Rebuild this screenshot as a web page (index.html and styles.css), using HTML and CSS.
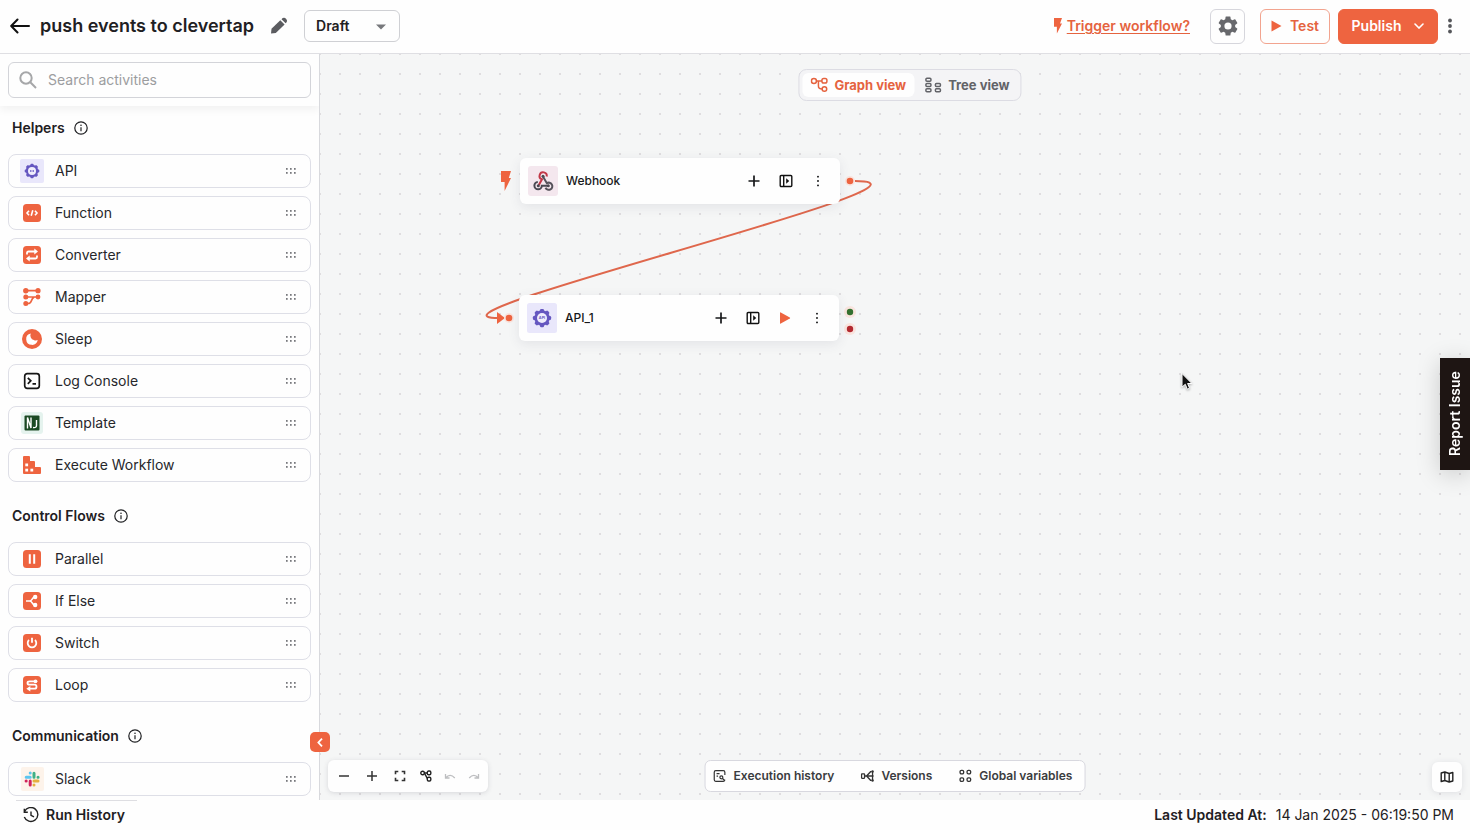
FILE: index.html
```html
<!DOCTYPE html>
<html lang="en">
<head>
<meta charset="utf-8">
<meta name="viewport" content="width=device-width, initial-scale=1">
<title>push events to clevertap</title>
<link rel="stylesheet" href="styles.css">
</head>
<body>
<svg class="sprite" aria-hidden="true">
  <symbol id="grip" viewBox="0 0 12 8"><g fill="#6a6b70"><rect x="1" y="1" width="1.700" height="1.700" rx=".5"/><rect x="5" y="1" width="1.700" height="1.700" rx=".5"/><rect x="9" y="1" width="1.700" height="1.700" rx=".5"/><rect x="1" y="5" width="1.700" height="1.700" rx=".5"/><rect x="5" y="5" width="1.700" height="1.700" rx=".5"/><rect x="9" y="5" width="1.700" height="1.700" rx=".5"/></g></symbol>
  <symbol id="info" viewBox="0 0 14 14"><g fill="none" stroke="currentColor" stroke-width="1.2"><circle cx="7" cy="7" r="6.2"/><path d="M7 6.2v4"/></g><circle cx="7" cy="4.2" r=".8" fill="currentColor"/></symbol>
  <symbol id="gear" viewBox="0 0 24 24"><rect width="24" height="24" rx="2" fill="#e9e7fb"/><g fill="#6557c0"><circle cx="12" cy="12" r="6.200"/><rect x="10.400" y="4.700" width="3.200" height="14.600" rx="1"/><rect x="10.400" y="4.700" width="3.200" height="14.600" rx="1" transform="rotate(45 12 12)"/><rect x="10.400" y="4.700" width="3.200" height="14.600" rx="1" transform="rotate(90 12 12)"/><rect x="10.400" y="4.700" width="3.200" height="14.600" rx="1" transform="rotate(135 12 12)"/></g><circle cx="12" cy="12" r="4" fill="#efedfc"/></symbol>
  <symbol id="bolt" viewBox="0 0 10 20"><path d="M0 0h10L7.500 7H10L3.600 19.500V11H0z" fill="#ee6440"/></symbol>
  <symbol id="plus" viewBox="0 0 14 14"><path d="M7 1.500v11M1.500 7h11" stroke="currentColor" stroke-width="1.700"/></symbol>
  <symbol id="panel" viewBox="0 0 14 14"><g fill="none" stroke="#111" stroke-width="1.400"><rect x="1.200" y="1.500" width="11.600" height="11" rx="1"/><path d="M4.700 1.500v11"/></g><path d="M7.200 4.300 10.200 7 7.200 9.700z" fill="#111"/></symbol>
  <symbol id="dots" viewBox="0 0 4 16"><g fill="currentColor"><circle cx="2" cy="3" r="1.100"/><circle cx="2" cy="8" r="1.100"/><circle cx="2" cy="13" r="1.100"/></g></symbol>
  <symbol id="play" viewBox="0 0 12 12"><path d="M1 .8v10.400q0 .8.800.400l9-5q.800-.600 0-1.200l-9-5Q1 0 1 .8z" fill="#ee6440"/></symbol>
</svg>

<header class="topbar">
  <button class="plain" aria-label="Back"><svg width="20" height="16" viewBox="0 0 20 16" fill="none" stroke="#111" stroke-width="2" stroke-linecap="round" stroke-linejoin="round"><path d="M19 8H1.500M7.500 1.500 1.200 8l6.300 6.500"/></svg></button>
  <h1 class="title">push events to clevertap</h1>
  <button class="plain edit" aria-label="Rename"><svg width="18" height="18" viewBox="0 0 18 18" fill="#5b5c60"><path d="M1 16.500l.5-4.700 8.800-8.500 4.300 4.200-8.800 8.500z"/><path d="m11.500 2.200 1.200-1.200q2-.8 3.300.7 1.600 1.400.8 3.200l-1.200 1.400z"/></svg></button>
  <div class="status">
    <select class="status-select" aria-label="Workflow status"><option>Draft</option><option>Published</option></select>
    <svg class="status-caret" width="10" height="6" viewBox="0 0 10 6"><path d="M0 .5h10L5 5.500z" fill="#77787c"/></svg>
  </div>
  <div class="actions">
    <a class="trigger" href="#trigger"><svg width="8" height="16"><use href="#bolt"/></svg><span>Trigger workflow?</span></a>
    <button class="btn gear" aria-label="Settings"><svg width="24" height="24" viewBox="0 0 24 24" fill="#67686c"><path d="M19.140 12.940c.04-.3.060-.61.060-.94s-.02-.64-.07-.94l2.030-1.580a.49.490 0 0 0 .12-.61l-1.920-3.320a.49.490 0 0 0-.59-.22l-2.390.96a7 7 0 0 0-1.620-.94l-.36-2.540A.48.480 0 0 0 13.920 2.400h-3.840a.48.480 0 0 0-.47.410l-.36 2.540c-.59.240-1.130.57-1.620.94l-2.390-.96a.48.480 0 0 0-.59.220L2.740 8.870a.48.480 0 0 0 .12.610l2.030 1.580c-.05.3-.09.630-.09.940s.02.640.07.940l-2.030 1.580a.49.490 0 0 0-.12.610l1.920 3.320c.12.220.37.290.59.220l2.390-.96c.5.380 1.030.7 1.620.94l.36 2.540c.05.240.24.410.48.410h3.840c.24 0 .44-.17.470-.41l.36-2.540c.59-.24 1.130-.56 1.620-.94l2.390.96c.22.080.47 0 .59-.22l1.920-3.320a.48.480 0 0 0-.12-.61zM12 15.600A3.600 3.600 0 1 1 12 8.400a3.600 3.600 0 0 1 0 7.200z"/></svg></button>
    <button class="btn test"><svg width="11" height="12" viewBox="0 0 11 12"><path d="M.5.500v11L10.500 6z" fill="#ee6440"/></svg>Test</button>
    <button class="btn publish">Publish<svg width="10" height="6" viewBox="0 0 10 6" fill="none" stroke="#fff" stroke-width="1.600" stroke-linecap="round"><path d="m1 1 4 4 4-4"/></svg></button>
    <button class="plain more" aria-label="More"><svg width="6" height="18" viewBox="0 0 6 18" fill="#55565a"><circle cx="3" cy="3.500" r="1.900"/><circle cx="3" cy="9" r="1.900"/><circle cx="3" cy="14.500" r="1.900"/></svg></button>
  </div>
</header>

<div class="workspace">
  <aside class="sidebar">
    <div class="search-wrap">
      <label class="search">
        <svg width="18" height="18" viewBox="0 0 18 18" fill="none" stroke="#a6a7a9" stroke-width="2"><circle cx="7" cy="7" r="5.700"/><path d="m11.300 11.300 5.700 5.700"/></svg>
        <input type="search" placeholder="Search activities" aria-label="Search activities">
      </label>
    </div>
    <div class="catalog">
      <section class="group">
        <h2 class="group-title">Helpers <svg width="14" height="14"><use href="#info"/></svg></h2>
        <ul class="items">
          <li><button class="item"><svg width="24" height="24" viewBox="0 0 24 24"><use href="#gear"/><path d="M10 12h4" stroke="#6557c0" stroke-width="1.500" stroke-dasharray="1 .5"/></svg><span>API</span><svg width="12" height="8"><use href="#grip"/></svg></button></li>
          <li><button class="item"><svg width="24" height="24" viewBox="0 0 24 24"><rect x="3" y="3" width="18" height="18" rx="3.500" fill="#ee6440"/><path d="M9 9.700 7 12l2 2.300M15 9.700l2 2.300-2 2.300M12.800 9.300l-1.600 5.400" fill="none" stroke="#fff" stroke-width="1.600"/></svg><span>Function</span><svg width="12" height="8"><use href="#grip"/></svg></button></li>
          <li><button class="item"><svg width="24" height="24" viewBox="0 0 24 24"><rect x="3" y="3" width="18" height="18" rx="3.500" fill="#ee6440"/><path d="M7 11.500V10q0-1.500 1.500-1.500H15M17 12.500V14q0 1.500-1.500 1.500H9" fill="none" stroke="#fff" stroke-width="1.800"/><path d="M14.300 5.500v6l3.700-3zM9.700 12.500v6l-3.700-3z" fill="#fff"/></svg><span>Converter</span><svg width="12" height="8"><use href="#grip"/></svg></button></li>
          <li><button class="item"><svg width="24" height="24" viewBox="0 0 24 24"><path d="M6 5.700h12M6 12h12M6 18.500h2q2.500 0 3.300-2.500T14 12h4" fill="none" stroke="#ee6440" stroke-width="1.700"/><g fill="#ee6440"><circle cx="5.800" cy="5.700" r="2.700"/><circle cx="5.800" cy="12" r="2.500"/><circle cx="5.800" cy="18.500" r="2.500"/><circle cx="18" cy="5.700" r="2.600"/><circle cx="18" cy="12" r="2.400"/></g></svg><span>Mapper</span><svg width="12" height="8"><use href="#grip"/></svg></button></li>
          <li><button class="item"><svg width="24" height="24" viewBox="0 0 24 24"><circle cx="12" cy="12" r="10" fill="#ee6440"/><path d="M10.800 6.400a5.800 5.800 0 1 0 6.900 6.700 4.600 4.600 0 0 1-3.900-.1 4.800 4.800 0 0 1-3-6.600z" fill="#fff"/></svg><span>Sleep</span><svg width="12" height="8"><use href="#grip"/></svg></button></li>
          <li><button class="item"><svg width="24" height="24" viewBox="0 0 24 24" fill="none" stroke="#161616" stroke-width="1.700"><rect x="4.700" y="4.700" width="14.600" height="14.600" rx="2.500"/><path d="m7.800 8.800 3 3-3 3M12.500 14.800h3.500"/></svg><span>Log Console</span><svg width="12" height="8"><use href="#grip"/></svg></button></li>
          <li><button class="item"><svg width="24" height="24" viewBox="0 0 24 24"><rect x="1" y="1" width="22" height="22" rx="3" fill="#e5f3ee"/><rect x="4.500" y="4.500" width="15" height="15" rx="1" fill="#1c4a24"/><path d="M7.500 17.500v-11l3.500 10.500V6.500M16.500 9v5.500q0 2.500-3.500 2" fill="none" stroke="#fff" stroke-width="1.400"/></svg><span>Template</span><svg width="12" height="8"><use href="#grip"/></svg></button></li>
          <li><button class="item"><svg width="24" height="24" viewBox="0 0 24 24"><path d="M3 4q0-1 1-1h5q1 0 1 1v4h4q1 0 1 1v5h5q1 0 1 1v5q0 1-1 1H4q-1 0-1-1z" fill="#ee6440"/><g fill="#fff"><rect x="5.300" y="10.500" width="2.800" height="2.800"/><rect x="5.300" y="15.700" width="2.800" height="2.800"/><rect x="10.400" y="15.700" width="2.800" height="2.800"/></g></svg><span>Execute Workflow</span><svg width="12" height="8"><use href="#grip"/></svg></button></li>
        </ul>
      </section>
      <section class="group">
        <h2 class="group-title">Control Flows <svg width="14" height="14"><use href="#info"/></svg></h2>
        <ul class="items">
          <li><button class="item"><svg width="24" height="24" viewBox="0 0 24 24"><rect x="3" y="3" width="18" height="18" rx="3.500" fill="#ee6440"/><path d="M9.800 7.300v9.400M14.200 7.300v9.400" stroke="#fff" stroke-width="2"/></svg><span>Parallel</span><svg width="12" height="8"><use href="#grip"/></svg></button></li>
          <li><button class="item"><svg width="24" height="24" viewBox="0 0 24 24"><rect x="3" y="3" width="18" height="18" rx="3.500" fill="#ee6440"/><path d="M6 12h3.500q1.500 0 2.500-1.700T14.500 8M9.500 12q1.500 0 2.500 1.700t2.500 2.300" fill="none" stroke="#fff" stroke-width="1.600"/><circle cx="15.200" cy="8" r="2.200" fill="#fff"/><circle cx="15.200" cy="16" r="2.200" fill="#fff"/></svg><span>If Else</span><svg width="12" height="8"><use href="#grip"/></svg></button></li>
          <li><button class="item"><svg width="24" height="24" viewBox="0 0 24 24"><rect x="3" y="3" width="18" height="18" rx="3.500" fill="#ee6440"/><path d="M9 9a4.300 4.300 0 1 0 6 0M12 6.800v5" fill="none" stroke="#fff" stroke-width="1.800"/></svg><span>Switch</span><svg width="12" height="8"><use href="#grip"/></svg></button></li>
          <li><button class="item"><svg width="24" height="24" viewBox="0 0 24 24"><rect x="3" y="3" width="18" height="18" rx="3.500" fill="#ee6440"/><path d="M15.500 8.300H9.500Q7.500 8.300 7.500 10t2 1.700h5q2 0 2 2t-2 2H9" fill="none" stroke="#fff" stroke-width="1.800"/><circle cx="15.500" cy="8.300" r="1.900" fill="#fff"/><path d="M10.300 12.900v5.600l-4-2.800z" fill="#fff"/></svg><span>Loop</span><svg width="12" height="8"><use href="#grip"/></svg></button></li>
        </ul>
      </section>
      <section class="group">
        <h2 class="group-title">Communication <svg width="14" height="14"><use href="#info"/></svg></h2>
        <ul class="items">
          <li><button class="item"><svg width="24" height="24" viewBox="0 0 24 24"><rect x="1" y="0" width="23" height="24" rx="2" fill="#fdf3ea"/><g fill="none" stroke-width="3" stroke-linecap="round"><path d="M6.200 10.200h4M10.200 5.900v.1" stroke="#5cc5ef"/><path d="M14 6.200v4M18 10.200h.1" stroke="#3fb185"/><path d="M14 14h4M14 18v.1" stroke="#e6b03f"/><path d="M10.200 14v4M6.100 14h.1" stroke="#d0245c"/></g></svg><span>Slack</span><svg width="12" height="8"><use href="#grip"/></svg></button></li>
        </ul>
      </section>
    </div>
    <button class="collapse" aria-label="Collapse sidebar"><svg width="6" height="9" viewBox="0 0 6 9" fill="none" stroke="#fff" stroke-width="1.800"><path d="M5 .7 1.400 4.500 5 8.300"/></svg></button>
  </aside>

  <main class="canvas">
    <svg class="edges" aria-hidden="true">
      <path d="M535 127C652 127 76 264 179 264" fill="none" stroke="#df674c" stroke-width="2"/>
      <path d="M177 258v12l8-6z" fill="#ee6440"/>
      <g fill="#f9e4de"><circle cx="530" cy="127" r="5"/><circle cx="189" cy="264" r="5"/><circle cx="530" cy="258" r="6"/><circle cx="530" cy="275" r="6"/></g>
      <circle cx="530" cy="127" r="3.300" fill="#ee6440"/><circle cx="189" cy="264" r="3.300" fill="#ee6440"/>
      <circle cx="530" cy="258" r="3.200" fill="#34702f"/><circle cx="530" cy="275" r="3.200" fill="#b32a30"/>
    </svg>
    <svg class="node-bolt" width="12" height="20" viewBox="0 0 12 20"><path d="M1 0h10L8.800 7H11L4.600 20V11H1z" fill="#ee6440"/></svg>

    <article class="node node-webhook">
      <svg width="30" height="30" viewBox="0 0 30 30"><rect width="30" height="30" rx="3" fill="#f4e7ee"/><g fill="none" stroke-width="2"><path d="M10.800 19 14 13.300a3.600 3.600 0 1 1 4.700-2.800" stroke="#c23747"/><path d="m15 10.500 3.800 6.700a3.600 3.600 0 1 1-1.300 4.600" stroke="#55525a"/><path d="M20.500 19.700h-6.700a3.700 3.700 0 1 1-4-3.800" stroke="#494851"/></g><g fill="#4a4850"><circle cx="15" cy="10.300" r="1.500"/><circle cx="10.300" cy="19.700" r="1.500"/><circle cx="20.300" cy="19.700" r="1.500"/></g></svg>
      <h3 class="node-name">Webhook</h3>
      <button class="plain" aria-label="Add step"><svg width="14" height="14"><use href="#plus"/></svg></button>
      <button class="plain" aria-label="Open panel"><svg width="14" height="14"><use href="#panel"/></svg></button>
      <button class="plain" aria-label="More options"><svg width="14" height="14"><use href="#dots"/></svg></button>
    </article>
    <article class="node node-api">
      <svg width="30" height="30" viewBox="0 0 24 24"><use href="#gear"/><text x="12" y="13" font-size="3" font-weight="700" text-anchor="middle" fill="#6557c0">API</text></svg>
      <h3 class="node-name">API_1</h3>
      <button class="plain" aria-label="Add step"><svg width="14" height="14"><use href="#plus"/></svg></button>
      <button class="plain" aria-label="Open panel"><svg width="14" height="14"><use href="#panel"/></svg></button>
      <button class="plain" aria-label="Run step"><svg width="14" height="12"><use href="#play"/></svg></button>
      <button class="plain" aria-label="More options"><svg width="14" height="14"><use href="#dots"/></svg></button>
    </article>

    <div class="views">
      <button class="view active"><svg width="18" height="16" viewBox="0 0 18 16" fill="none" stroke="currentColor" stroke-width="1.500"><circle cx="3.500" cy="4" r="2.500"/><rect x="11.500" y="1.500" width="5" height="4.500" rx="1.800"/><circle cx="14" cy="12" r="2.300"/><path d="M6 4h5.500M8 4v5q0 3 3.700 3"/></svg>Graph view</button>
      <button class="view"><svg width="18" height="16" viewBox="0 0 18 16" fill="none" stroke="currentColor" stroke-width="1.500"><rect x="1.500" y="1.200" width="5" height="3" rx="1"/><rect x="1.500" y="6.500" width="5" height="3" rx="1"/><rect x="1.500" y="11.700" width="5" height="3" rx="1"/><rect x="11" y="6.500" width="5" height="3" rx="1"/><rect x="11" y="11.700" width="5" height="3" rx="1"/></svg>Tree view</button>
    </div>

    <div class="zoombar">
      <button class="plain wide" aria-label="Zoom out"><svg width="12" height="12" viewBox="0 0 12 12"><path d="M1 6h10" stroke="#333" stroke-width="1.500"/></svg></button>
      <button class="plain wide" aria-label="Zoom in"><svg width="12" height="12" viewBox="0 0 12 12"><path d="M1 6h10M6 1v10" stroke="#333" stroke-width="1.500"/></svg></button>
      <button class="plain wide" aria-label="Fit view"><svg width="12" height="12" viewBox="0 0 12 12" fill="none" stroke="#333" stroke-width="1.600"><path d="M1.500 4.300V1.500h2.800M7.700 1.500h2.800v2.800M10.500 7.700v2.800H7.700M4.300 10.500H1.500V7.700"/></svg></button>
      <button class="plain" aria-label="Auto layout"><svg width="12" height="12" viewBox="0 0 12 12" fill="none" stroke="#222" stroke-width="1.400"><circle cx="2.600" cy="3" r="1.800"/><rect x="7.300" y="1" width="3.500" height="3.800" rx="1.300"/><rect x="7.300" y="7.200" width="3.500" height="3.800" rx="1.300"/><path d="M4.500 3h3M5 4.200 7.300 8.500"/></svg></button>
      <button class="plain" aria-label="Undo"><svg width="12" height="12" viewBox="0 0 12 12" fill="none" stroke="#bdbec0" stroke-width="1.300"><path d="M1.500 4v4h4M1.800 7.800Q6 3 10.800 8"/></svg></button>
      <button class="plain" aria-label="Redo"><svg width="12" height="12" viewBox="0 0 12 12" fill="none" stroke="#bdbec0" stroke-width="1.300"><path d="M10.500 4v4h-4M10.200 7.800Q6 3 1.200 8"/></svg></button>
    </div>

    <nav class="tools">
      <button class="tool"><svg width="14" height="14" viewBox="0 0 14 14" fill="none" stroke="#333" stroke-width="1.200"><path d="M12.300 6V3.200q0-1.500-1.500-1.500H3.200q-1.500 0-1.500 1.500v7.600q0 1.500 1.500 1.500h7.600q1.500 0 1.500-1.500M4 4.700h3M4 7.200h1.500"/><circle cx="8.800" cy="8.300" r="1.500"/><path d="m10 9.500 2 2"/></svg>Execution history</button>
      <button class="tool"><svg width="14" height="14" viewBox="0 0 14 14" fill="none" stroke="#333" stroke-width="1.300"><rect x="1" y="4.800" width="3" height="4.500" rx=".5"/><path d="M4.200 7h7M6 7l4-4.300h1M6 7l4 4.300h1M12 2v10"/><g fill="#333" stroke="none"><circle cx="12" cy="2.500" r="1.200"/><circle cx="12" cy="7" r="1.100"/><circle cx="12" cy="11.500" r="1.200"/></g></svg>Versions</button>
      <button class="tool"><svg width="14" height="14" viewBox="0 0 14 14" fill="none" stroke="#333" stroke-width="1.300"><rect x="1.500" y="1.300" width="3.600" height="3.600" rx="1.300"/><rect x="8.500" y="1.300" width="3.600" height="3.600" rx="1.300"/><rect x="1.500" y="8.800" width="3.600" height="3.600" rx="1.300"/><rect x="8.500" y="8.800" width="3.600" height="3.600" rx="1.300"/></svg>Global variables</button>
    </nav>

    <button class="minimap" aria-label="Toggle minimap"><svg width="14" height="12" viewBox="0 0 14 12" fill="none" stroke="#222" stroke-width="1.400" stroke-linejoin="round"><path d="m1.200 2 3.600-1 4.400 1.500 3.600-1V10l-3.600 1-4.400-1.500-3.600 1zM4.800 1v8.500M9.200 2.500V11"/></svg></button>
    <svg class="cursor" width="14" height="20" viewBox="0 0 14 20" aria-hidden="true"><path d="M2 1.500v13.600l3.300-2.800 2 4.900 2.300-1-2-4.700h4.300z" fill="#111" stroke="#fff"/></svg>
    <button class="report">Report Issue</button>
  </main>
</div>

<footer class="statusbar">
  <button class="history"><svg width="16" height="16" viewBox="0 0 16 16" fill="none" stroke="#222" stroke-width="1.400"><path d="M1.500 4.500A7 7 0 1 1 1.300 10M1.300 1.800v3.400h3.500M8 4.500V8.300l3 1.600"/></svg>Run History</button>
  <p class="updated"><strong>Last Updated At:</strong><time datetime="2025-01-14T18:19:50">14 Jan 2025 - 06:19:50 PM</time></p>
</footer>
</body>
</html>
```
FILE: styles.css
```css
* { box-sizing: border-box; }
body {
  margin: 0;
  height: 100vh;
  display: flex;
  flex-direction: column;
  overflow: hidden;
  font-family: Inter, "Liberation Sans", sans-serif;
  font-size: 14px;
  line-height: 20px;
  color: #1f2023;
  background: #fefefe;
}
button, input, select { font: inherit; color: inherit; }
button { cursor: pointer; }
h1, h2, h3, p, ul { margin: 0; padding: 0; }
ul { list-style: none; }
svg { display: block; flex: none; }
.sprite { position: absolute; width: 0; height: 0; }
.plain { display: flex; align-items: center; justify-content: center; padding: 0; border: 0; background: none; }

.topbar {
  display: flex;
  align-items: center;
  flex: none;
  height: 54px;
  padding: 0 17px 1px 10px;
  border-bottom: 1px solid #dfdfe3;
  background: #fefefe;
}
.title { margin-left: 10px; font-size: 18px; line-height: 24px; font-weight: 600; }
.edit { margin-left: 16px; }
.status { position: relative; margin-left: 16px; }
.status-select {
  appearance: none;
  display: block;
  width: 96px;
  height: 32px;
  padding: 0 30px 0 11px;
  border: 1px solid #cfd0d4;
  border-radius: 6px;
  background: #fefefe;
  font-weight: 600;
}
.status-caret { position: absolute; right: 14px; top: 14px; pointer-events: none; }
.actions { display: flex; align-items: center; margin-left: auto; }
.trigger { display: flex; align-items: center; gap: 5px; color: #e5633f; font-weight: 600; text-decoration: none; }
.trigger span { text-decoration: underline; text-underline-offset: 2px; }
.btn {
  display: flex;
  align-items: center;
  justify-content: center;
  height: 35px;
  border: 1px solid #d6d6dc;
  border-radius: 6px;
  background: #fefefe;
  font-weight: 600;
}
.gear { width: 35px; margin-left: 20px; padding: 0; }
.test { width: 70px; margin-left: 15px; padding: 0; gap: 8px; border-color: #f2a48f; color: #e5633f; }
.publish { width: 100px; margin-left: 8px; padding: 0; gap: 13px; border-color: #ee6440; background: #ee6440; color: #fff; }
.more { margin-left: 9px; }

.workspace { display: flex; flex: 1; min-height: 0; }
.sidebar {
  position: relative;
  z-index: 2;
  display: flex;
  flex-direction: column;
  flex: none;
  width: 320px;
  border-right: 1px solid #d8d9dd;
  background: #fefefe;
}
.search-wrap { padding: 8px; box-shadow: 0 4px 8px rgba(0, 0, 0, .05); clip-path: inset(0 0 -12px 0); }
.search {
  display: flex;
  align-items: center;
  gap: 11px;
  height: 36px;
  padding: 0 10px;
  border: 1px solid #d3d4d9;
  border-radius: 6px;
}
.search input { flex: 1; min-width: 0; padding: 0; border: 0; outline: 0; background: none; }
.search input::placeholder { color: #9c9da0; opacity: 1; }
.catalog { flex: 1; min-height: 0; padding: 10px 8px 0; overflow: hidden; }
.group { margin-bottom: 22px; }
.group-title {
  display: flex;
  align-items: center;
  gap: 9px;
  height: 24px;
  margin-bottom: 14px;
  padding-left: 4px;
  font-size: 14px;
  font-weight: 600;
}
.items { display: flex; flex-direction: column; gap: 8px; }
.item {
  display: flex;
  align-items: center;
  gap: 11px;
  width: 100%;
  height: 34px;
  padding: 0 13px 0 11px;
  border: 1px solid #dedfe7;
  border-radius: 8px;
  background: #fefefe;
  color: #26272b;
  text-align: left;
}
.item span { flex: 1; }
.collapse {
  position: absolute;
  right: -11px;
  bottom: 48px;
  display: flex;
  align-items: center;
  justify-content: center;
  width: 20px;
  height: 20px;
  padding: 0;
  border: 0;
  border-radius: 5px;
  background: #ee6440;
}

.canvas {
  position: relative;
  flex: 1;
  min-width: 0;
  overflow: hidden;
  background: #f5f6f6 radial-gradient(circle, #dfdddf 1px, transparent 1px) -10px -10px / 20px 20px;
}
.edges { position: absolute; inset: 0; width: 100%; height: 100%; }
.node-bolt { position: absolute; left: 180px; top: 117px; }
.node {
  position: absolute;
  display: flex;
  align-items: center;
  gap: 18px;
  width: 320px;
  height: 46px;
  padding: 0 15px 0 8px;
  border-radius: 6px;
  background: #fefefe;
  box-shadow: 0 3px 12px rgba(70, 70, 100, .1);
  color: #17181a;
}
.node-webhook { left: 200px; top: 104px; }
.node-api { left: 199px; top: 241px; }
.node-name { flex: 1; margin-left: -10px; font-size: 12px; font-weight: 500; }
.views {
  position: absolute;
  left: 50%;
  top: 15px;
  display: flex;
  gap: 2px;
  padding: 3px;
  border: 1px solid #dcdce3;
  border-radius: 8px;
  background: #f4f4f6;
  transform: translateX(-50%);
  margin-left: 15px;
}
.view {
  display: flex;
  align-items: center;
  gap: 6px;
  height: 24px;
  padding: 0 8px;
  border: 0;
  border-radius: 6px;
  background: none;
  color: #626368;
  font-size: 13px;
  font-weight: 700;
  white-space: nowrap;
}
.view.active { background: #fefefe; color: #e5633f; }
.zoombar {
  position: absolute;
  left: 8px;
  bottom: 8px;
  display: flex;
  width: 160px;
  height: 32px;
  padding: 0 2px;
  border-radius: 6px;
  background: #fefefe;
  box-shadow: 0 1px 5px rgba(60, 60, 80, .16);
}
.zoombar .plain { width: 24px; }
.zoombar .wide { width: 28px; }
.tools {
  position: absolute;
  left: 50%;
  bottom: 8px;
  display: flex;
  gap: 26px;
  padding: 0 12px 0 7px;
  border: 1px solid #d8d8df;
  border-radius: 6px;
  background: #fefefe;
  transform: translateX(-50%);
}
.tool {
  display: flex;
  align-items: center;
  gap: 7px;
  height: 30px;
  padding: 0;
  border: 0;
  background: none;
  color: #3b3c40;
  font-size: 12px;
  font-weight: 600;
  white-space: nowrap;
}
.minimap {
  position: absolute;
  right: 8px;
  bottom: 8px;
  display: flex;
  align-items: center;
  justify-content: center;
  width: 30px;
  height: 30px;
  padding: 0;
  border: 0;
  border-radius: 6px;
  background: #fefefe;
  box-shadow: 0 1px 6px rgba(60, 60, 80, .12);
}
.cursor { position: absolute; left: 860px; top: 318px; filter: drop-shadow(0 1px 1px rgba(0, 0, 0, .3)); }
.report {
  position: absolute;
  right: 0;
  top: 304px;
  width: 30px;
  height: 112px;
  padding: 0;
  border: 0;
  background: #1e1513;
  box-shadow: 0 -4px 24px rgba(0, 0, 0, .18);
  color: #fff;
  font-weight: 600;
  writing-mode: vertical-rl;
  transform: rotate(180deg);
}

.statusbar {
  display: flex;
  align-items: center;
  justify-content: space-between;
  flex: none;
  height: 30px;
  padding: 0 16px;
  background: #fefefe;
}
.history {
  display: flex;
  align-items: center;
  gap: 7px;
  width: 121px;
  height: 30px;
  padding: 0 7px 1px;
  border: 0;
  border-top: 1px solid #dedee2;
  background: none;
  font-weight: 600;
  white-space: nowrap;
}
.updated { display: flex; gap: 9px; }
.updated strong { font-weight: 600; }
```
